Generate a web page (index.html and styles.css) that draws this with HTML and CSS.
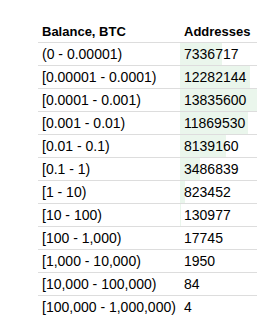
FILE: index.html
```html
<!DOCTYPE html>
<html>
<head>
<meta charset="utf-8">
<link rel="stylesheet" href="styles.css">
</head>
<body>
<table class="dist">
  <colgroup><col class="c-range"><col class="c-count"></colgroup>
  <thead>
    <tr><th>Balance, BTC</th><th>Addresses</th></tr>
  </thead>
  <tbody>
    <tr><td>(0 - 0.00001)</td><td class="bar" style="--p:53.03%">7336717</td></tr>
    <tr><td>[0.00001 - 0.0001)</td><td class="bar" style="--p:88.77%">12282144</td></tr>
    <tr><td>[0.0001 - 0.001)</td><td class="bar" style="--p:100%">13835600</td></tr>
    <tr><td>[0.001 - 0.01)</td><td class="bar" style="--p:85.79%">11869530</td></tr>
    <tr><td>[0.01 - 0.1)</td><td class="bar" style="--p:58.83%">8139160</td></tr>
    <tr><td>[0.1 - 1)</td><td class="bar" style="--p:25.2%">3486839</td></tr>
    <tr><td>[1 - 10)</td><td class="bar" style="--p:5.95%">823452</td></tr>
    <tr><td>[10 - 100)</td><td class="bar" style="--p:0.95%">130977</td></tr>
    <tr><td>[100 - 1,000)</td><td class="bar" style="--p:0.13%">17745</td></tr>
    <tr><td>[1,000 - 10,000)</td><td class="bar" style="--p:0.01%">1950</td></tr>
    <tr><td>[10,000 - 100,000)</td><td class="bar" style="--p:0%">84</td></tr>
    <tr><td>[100,000 - 1,000,000)</td><td class="bar" style="--p:0%">4</td></tr>
  </tbody>
</table>
</body>
</html>
```
FILE: styles.css
```css
html {
  overflow: hidden;
  background: #fff;
}
body {
  margin: 0;
  font-family: "Liberation Sans", Arial, sans-serif;
  font-size: 14px;
  line-height: 16px;
  color: #000;
}
.dist {
  margin: 21px 0 0 38px;
  border-collapse: collapse;
  table-layout: fixed;
  width: 221px;
}
.c-range { width: 142px; }
.c-count { width: 79px; }
.dist th,
.dist td {
  padding: 3px 4px;
  text-align: left;
  white-space: nowrap;
  border-bottom: 1px solid #dddddd;
}
.dist th {
  font-size: 13px;
  font-weight: bold;
  padding-top: 3px;
  padding-bottom: 2px;
}
.dist tbody tr:last-child td {
  border-bottom: none;
}
.bar {
  background: linear-gradient(to right, #eaf6ec var(--p), transparent var(--p));
}
```
